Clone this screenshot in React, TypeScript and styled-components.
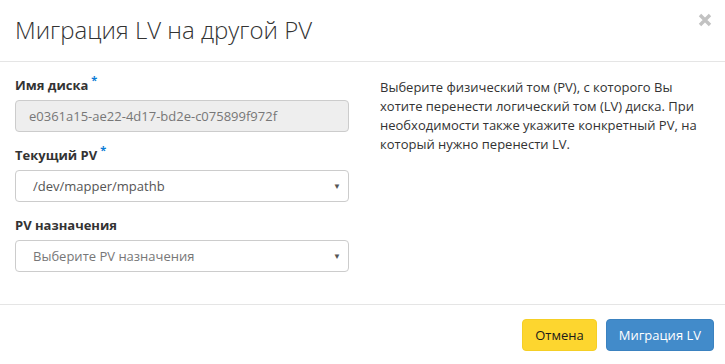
import React from 'react';
import styled, { createGlobalStyle } from 'styled-components';

const GlobalStyle = createGlobalStyle`
  html, body {
    margin: 0;
    padding: 0;
    background: #fff;
  }
  body {
    font-family: "Open Sans", "Noto Sans", sans-serif;
    font-size: 13px;
    color: #333;
  }
  * {
    box-sizing: border-box;
  }
`;

const Modal = styled.div`
  width: 725px;
  height: 364px;
  background: #fff;
  display: flex;
  flex-direction: column;
`;

const Header = styled.div`
  height: 62px;
  flex: none;
  border-bottom: 1px solid #e5e5e5;
  padding: 0 12px 0 15px;
  display: flex;
  align-items: center;
  justify-content: space-between;
`;

const Title = styled.h3`
  margin: 0 0 2px;
  font-family: "Open Sans", sans-serif;
  font-weight: 300;
  font-size: 24px;
  color: #333;
  white-space: nowrap;
`;

const Close = styled.button`
  border: 0;
  background: none;
  padding: 0;
  margin-top: -19px;
  width: 16px;
  height: 16px;
  cursor: pointer;
`;

const Body = styled.div`
  flex: 1;
  display: grid;
  grid-template-columns: 334px 1fr;
  column-gap: 31px;
  padding: 14px 15px 0 15px;
  border-bottom: 1px solid #e5e5e5;
`;

const Form = styled.div`
  display: flex;
  flex-direction: column;
`;

const Group = styled.div`
  margin-bottom: 14px;
`;

const Label = styled.label`
  display: block;
  height: 19px;
  font-weight: 700;
  font-size: 13px;
  color: #333;
  margin-bottom: 5px;
  line-height: 19px;
`;

const Star = styled.span`
  color: #0a7cd6;
  font-size: 11px;
  line-height: 0;
  margin-left: 3px;
  vertical-align: 6px;
`;

const Field = styled.div<{ $disabled?: boolean }>`
  height: 32px;
  border: 1px solid #ccc;
  border-radius: 4px;
  background: ${(p) => (p.$disabled ? '#eee' : '#fff')};
  display: flex;
  align-items: center;
  justify-content: space-between;
  padding: 0 7px 0 ${(p) => (p.$disabled ? '13px' : '17px')};
  color: ${(p) => (p.$disabled ? '#777' : '#555')};
  font-size: 13px;
  line-height: 18px;
`;

const Placeholder = styled.span`
  color: #777;
`;

const Caret = styled.span`
  font-size: 8px;
  line-height: 10px;
  color: #555;
`;

const Help = styled.p`
  margin: 2px 0 0;
  font-size: 13px;
  line-height: 19px;
  color: #333;
`;

const Footer = styled.div`
  height: 59px;
  flex: none;
  display: flex;
  justify-content: flex-end;
  align-items: center;
  gap: 9px;
  padding: 0 11px 0 0;
`;

const Button = styled.button<{ $variant: 'cancel' | 'primary' }>`
  height: 32px;
  border-radius: 4px;
  font-family: "Open Sans", sans-serif;
  font-size: 13px;
  padding: 0 12px;
  border: 1px solid ${(p) => (p.$variant === 'cancel' ? '#f5cf25' : '#3b82c0')};
  background: ${(p) => (p.$variant === 'cancel' ? '#fdd62f' : '#428bca')};
  color: ${(p) => (p.$variant === 'cancel' ? '#1a1a1a' : '#fff')};
  cursor: pointer;
`;

export default function App() {
  return (
    <>
      <GlobalStyle />
      <Modal>
        <Header>
          <Title>Миграция LV на другой PV</Title>
          <Close aria-label="Закрыть">
            <svg width="14" height="14" viewBox="0 0 14 14">
              <path d="M2 2 L12 12 M12 2 L2 12" stroke="#c2c2c2" strokeWidth="3.4" strokeLinecap="butt" />
            </svg>
          </Close>
        </Header>
        <Body>
          <Form>
            <Group>
              <Label>
                Имя диска<Star>*</Star>
              </Label>
              <Field $disabled>e0361a15-ae22-4d17-bd2e-c075899f972f</Field>
            </Group>
            <Group>
              <Label>
                Текущий PV<Star>*</Star>
              </Label>
              <Field>
                <span>/dev/mapper/mpathb</span>
                <Caret>▼</Caret>
              </Field>
            </Group>
            <Group>
              <Label>PV назначения</Label>
              <Field>
                <Placeholder>Выберите PV назначения</Placeholder>
                <Caret>▼</Caret>
              </Field>
            </Group>
          </Form>
          <Help>
            Выберите физический том (PV), с которого Вы хотите перенести логический том (LV) диска. При
            необходимости также укажите конкретный PV, на который нужно перенести LV.
          </Help>
        </Body>
        <Footer>
          <Button $variant="cancel">Отмена</Button>
          <Button $variant="primary">Миграция LV</Button>
        </Footer>
      </Modal>
    </>
  );
}
